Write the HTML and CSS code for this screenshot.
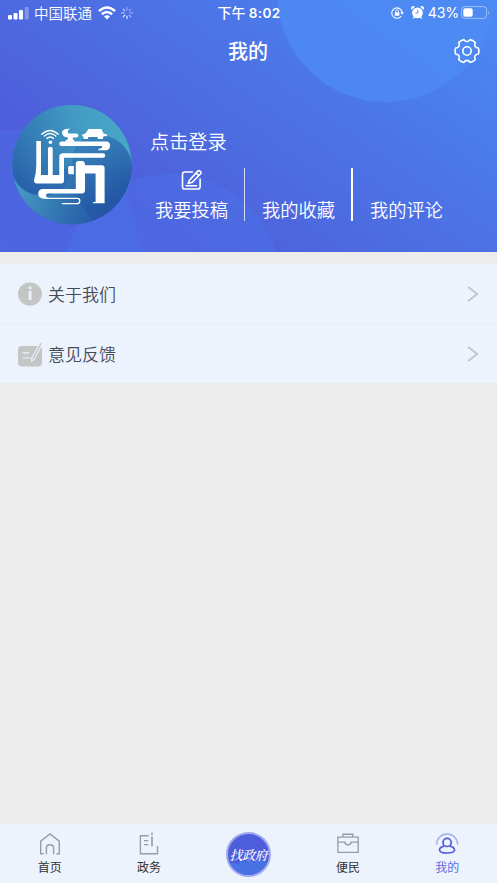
FILE: index.html
```html
<!DOCTYPE html>
<html lang="zh-CN">
<head>
<meta charset="utf-8">
<meta name="viewport" content="width=device-width, initial-scale=1">
<title>我的</title>
<link rel="stylesheet" href="styles.css">
</head>
<body>
<div class="app">
  <header class="hero">
    <svg class="hero-bg" viewBox="0 0 497 252" aria-hidden="true">
      <circle cx="386" cy="-7" r="109" fill="#4d8bf4" fill-opacity=".8"/>
      <circle cx="20" cy="247" r="118" fill="#4b72e8" fill-opacity=".35"/>
      <circle cx="171" cy="284" r="110" fill="#4a76ea" fill-opacity=".4"/>
    </svg>
    <div class="status">
      <div class="status-left">
        <svg width="21" height="14" viewBox="0 0 21 14" fill="#fff"><rect x="0" y="9" width="4" height="4.5" rx="1"/><rect x="5.5" y="7" width="4" height="6.5" rx="1"/><rect x="11" y="4" width="4" height="9.5" rx="1"/><rect x="16.7" y="1" width="4" height="12.5" rx="1" opacity=".3"/></svg>
        <span class="carrier">中国联通</span>
        <svg class="wifi" width="18" height="14" viewBox="0 0 18 14" fill="none" stroke="#fff" stroke-width="2.5"><path d="M1 5.1Q9-2.2 17 5.1M3.9 8.2Q9 3.7 14.1 8.2"/><path d="M6 10.4Q9 8 12 10.4L9 13.5Z" fill="#fff" stroke="none"/></svg>
        <svg class="spin" width="12" height="12" viewBox="-6 -6 12 12" stroke="#fff" stroke-width="1.1" stroke-linecap="round"><path d="M0-3V-5.4M2.1-2.1L3.8-3.8" opacity=".4"/><path d="M3 0H5.4M2.1 2.1L3.8 3.8" opacity=".55"/><path d="M0 3V5.4M-2.1 2.1L-3.8 3.8" opacity=".95"/><path d="M-3 0H-5.4M-2.1-2.1L-3.8-3.8" opacity=".7"/></svg>
      </div>
      <div class="time">下午 <b>8:02</b></div>
      <div class="status-right">
        <svg width="13" height="12" viewBox="0 0 13 12" fill="none" stroke="#fff" stroke-width="1.1"><path d="M10.2 9.2A5.2 5.2 0 1 1 11.2 5.6"/><path d="M9.2 5.2H13L11.1 7.7Z" fill="#fff" stroke="none"/><rect x="3.8" y="5.2" width="4.6" height="3.6" rx=".5" fill="#fff" stroke="none"/><path d="M4.7 5.4V4.3a1.4 1.4 0 0 1 2.8 0v1.1" stroke-width=".9"/></svg>
        <svg class="alarm" width="13" height="13" viewBox="0 0 13 13"><g fill="#fff"><circle cx="6.5" cy="6.8" r="5.4"/><path d="M.6 3.8A2 2 0 0 1 3.8.8ZM12.4 3.8A2 2 0 0 0 9.2.8ZM1.6 12.2l1.6-2.2 1.4 1-1.6 1.6ZM11.4 12.2l-1.6-2.2-1.4 1 1.6 1.6Z"/></g><path d="M6.8 3.8V7.1H4.3" fill="none" stroke="#4c82ef" stroke-width=".9"/></svg>
        <span class="pct">43%</span>
        <svg class="batt" width="29" height="13" viewBox="0 0 29 13"><rect x=".6" y=".6" width="25" height="11.8" rx="3.2" fill="none" stroke="#fff" stroke-opacity=".45"/><rect x="2.3" y="2.2" width="9.4" height="8.6" rx="1.7" fill="#fff"/><path d="M27 4.5q1.6 2 0 4Z" fill="#fff" opacity=".5"/></svg>
      </div>
    </div>
    <div class="titlebar">
      <h1>我的</h1>
      <svg class="gear" width="26" height="26" viewBox="-13 -13 26 26" fill="none" stroke="#fff" stroke-width="1.6" stroke-linejoin="round"><path d="M11.4 3C8.2 3.3 6.9 5.4 8.3 8.4Q6.3 10.8 3.1 11.4C1.3 8.7-1.3 8.7-3.1 11.4Q-6.3 10.8-8.3 8.4C-6.9 5.4-8.2 3.3-11.4 3Q-12.4 0-11.4-3C-8.2-3.3-6.9-5.4-8.3-8.4Q-6.3-10.8-3.1-11.4C-1.3-8.7 1.3-8.7 3.1-11.4Q6.3-10.8 8.3-8.4C6.9-5.4 8.2-3.3 11.4-3Q12.4 0 11.4 3Z"/><circle r="4.2"/></svg>
    </div>
    <div class="profile">
      <svg class="avatar" width="120" height="120" viewBox="0 0 120 120">
        <defs>
          <linearGradient id="base" x1="0" y1="0" x2=".9" y2="1"><stop offset="0" stop-color="#347fb9"/><stop offset=".5" stop-color="#3478b8"/><stop offset="1" stop-color="#204f9e"/></linearGradient>
          <linearGradient id="top" x1="0" y1=".6" x2="1" y2=".4"><stop offset="0" stop-color="#2f72b2"/><stop offset=".6" stop-color="#439bc3"/><stop offset="1" stop-color="#4aa8c9"/></linearGradient>
          <linearGradient id="left" gradientUnits="userSpaceOnUse" x1="62" y1="22" x2="20" y2="92"><stop offset="0" stop-color="#3b8bbf" stop-opacity="0"/><stop offset="1" stop-color="#2455a4"/></linearGradient>
          <linearGradient id="low" x1="0" y1="0" x2="1" y2=".2"><stop offset="0" stop-color="#4aa5c7"/><stop offset=".65" stop-color="#2c69ad"/><stop offset="1" stop-color="#2152a2"/></linearGradient>
          <linearGradient id="right" x1=".3" y1="0" x2=".6" y2="1"><stop offset="0" stop-color="#3a87bd"/><stop offset=".8" stop-color="#2356a4"/></linearGradient>
          <clipPath id="disc"><circle cx="60" cy="59.6" r="59.8"/></clipPath>
        </defs>
        <g clip-path="url(#disc)">
          <rect width="120" height="120" fill="url(#base)"/>
          <path d="M0 0H120V60Q112 28 82 30Q60 34 60 60L0 85Z" fill="url(#top)"/>
          <path d="M0 0H82V30Q61 38 60 62Q58 84 38 90Q12 94 1 70Z" fill="url(#left)" fill-opacity=".75"/>
          <path d="M1 72Q12 94 38 90Q56 86 59 66L90 60L120 65V120H0Z" fill="url(#low)"/>
          <path d="M66 42Q76 29 91 31Q112 33 120 55V120H85Q60 94 59 66Z" fill="url(#right)" fill-opacity=".75"/>
        </g>
        <g fill="#fff">
          <path d="M24.3 36H29V70H36V43.5Q36 41.7 38.3 41.7T40.7 43.5V70H47.3V52Q47.3 48.3 51 48.3H91Q93.2 48.3 93.2 50.5T91 52.7H52V76Q52 78.4 49.5 78.4H25Q22 78.4 22 75.5Q24.3 68 24.3 60Z"/>
          <circle cx="38.4" cy="37.3" r="1.8"/>
          <path d="M49.5 36.6H94Q98 36.8 98 40.5Q98 45.3 93.5 45.3H86Q86.5 43.4 90 43.1V41H49.5Q47.3 41 47.3 38.8T49.5 36.6Z"/>
          <path d="M57.5 61H61.8V69.2H57.5Q56.2 69.2 56.2 67.5V62.5Q56.2 61 57.5 61Z"/>
          <path d="M63.8 59Q63.8 56.1 66.8 56.1H70Q73 56.1 73 60.2H90Q92.6 60.2 92.6 62.8V98.3H80.4Q80.5 97 83.6 96.8V68.5H73V85Q73 88.4 70 88.4H36Q34 88.5 34 90.5Q34 92.5 36 92.7V93.8H32Q26.2 93.2 26.2 89Q26.2 84.2 31 84.1H63.8Z"/>
          <path d="M58 23.8Q51 23 50 27.2Q50 31.8 55.8 32.6Q56.8 34.6 53.5 35.4V36.8H62.3V35.4Q60 34.6 61 32.6H64.5Q66.5 32 66.5 30.3Q66.3 28.6 64 28.6H56.5Q54.5 25.8 58 23.8Z"/>
          <path d="M76.5 24.1H89.5L91.5 28.4L95 29.4V31.3H91.5L90.8 34H86L85.3 32H76.5L75.8 34H71.8L71.2 31.3H70V29.7Q74 28.7 74.5 27Z"/>
        </g>
        <g fill="none" stroke="#fff" stroke-linecap="round"><path d="M29.8 29.2Q38 21.8 46.2 29.2" stroke-width="1.3"/><path d="M32.4 31Q38 26 43.8 31" stroke-width="1.3"/><path d="M35 33.4Q38.2 30.6 41.4 33.4" stroke-width="1.4"/><path d="M34 93.3H65.5Q67.8 93.3 67.8 95.8T65.5 98.7H50.5" stroke-width="1.3"/></g>
      </svg>
      <div class="profile-body">
        <div class="login">点击登录</div>
        <nav class="actions">
          <a class="action"><svg width="22" height="22" viewBox="0 0 22 22" fill="none" stroke="#fff" stroke-width="1.6" stroke-linecap="round" stroke-linejoin="round"><path d="M11.5 3H3.8Q1.5 3 1.5 5.3V17.7Q1.5 20 3.8 20H16.8Q19.1 20 19.1 17.7V10"/><path d="M8.4 11.2L16.5 2.4Q17.6 1.1 19 2.1Q20.8 3.4 19.6 4.8L11.3 13.2L7.1 14.5ZM15.2 4.1L17.7 6.3"/><path d="M5.2 16.7H15.5"/></svg><span>我要投稿</span></a>
          <a class="action"><span>我的收藏</span></a>
          <a class="action"><span>我的评论</span></a>
        </nav>
      </div>
    </div>
  </header>
  <main class="menu">
    <a class="row">
      <svg width="24" height="24" viewBox="0 0 24 24"><ellipse cx="12" cy="12" rx="12" ry="11.5" fill="#c4c5c5"/><path d="M12.1 8.8V18" stroke="#edf3fd" stroke-width="2.8"/><circle cx="12.1" cy="5.8" r="1.5" fill="#edf3fd"/></svg>
      <span>关于我们</span>
      <svg class="chev" width="12" height="16" viewBox="0 0 12 16"><path d="M1.2 1L10.2 8L1.2 15"/></svg>
    </a>
    <a class="row">
      <svg width="24" height="25" viewBox="0 0 24 25" fill="none"><rect y="4" width="24" height="20.5" rx="4" fill="#c4c5c5"/><path d="M4.8 10.8H11.2M4.8 16H12.5" stroke="#edf3fd" stroke-width="1.2"/><path d="M21.5 2.2L13.8 16L13.6 19L16.2 17.2L22.6 5" stroke="#edf3fd" stroke-width="1.2"/><path d="M23.3.7L15.1 16.7" stroke="#c4c5c5" stroke-width="1.2"/></svg>
      <span>意见反馈</span>
      <svg class="chev" width="12" height="16" viewBox="0 0 12 16"><path d="M1.2 1L10.2 8L1.2 15"/></svg>
    </a>
  </main>
  <footer class="tabs">
    <a class="tab"><svg width="24" height="24" viewBox="0 0 24 24" fill="none" stroke="#989da8" stroke-width="1.4"><path d="M5.7 21.8H2.7V9.2L12 2L21.3 9.2V21.8H18.3"/><path d="M8.4 22.3V16.2Q8.4 12.7 12 12.7T15.6 16.2V22.3"/></svg><span>首页</span></a>
    <a class="tab"><svg width="24" height="24" viewBox="0 0 24 24" fill="none" stroke="#989da8" stroke-width="1.4"><path d="M11.5 3.8H3.4V21.8H20.5V14"/><path d="M7 8.6H11.3M7 12.6H11.3"/><path d="M15 4.5V14.2M15 .8V3.1" stroke-width="1.7"/></svg><span>政务</span></a>
    <a class="tab"><span class="gov"><svg viewBox="0 0 40 40"><path d="M0 30Q5 26 10 29L14 25L18 27L22 24L26 28L31 24L40 28V40H0Z" fill="#4679e5" fill-opacity=".75"/><path d="M9 34L14 30L18 33L23 28L32 36" fill="none" stroke="#5278e0"/></svg><em>找政府</em></span></a>
    <a class="tab"><svg width="24" height="24" viewBox="0 0 24 24" fill="none" stroke="#989da8" stroke-width="1.4"><path d="M7 5V2.2H16.8V5M1.9 5.1H22.2V20.4H1.9ZM1.9 10.1H9.1V11.5Q12 14.2 14.9 11.5V10.1H22.2"/></svg><span>便民</span></a>
    <a class="tab active"><svg width="24" height="24" viewBox="0 0 24 24" fill="none" stroke="#505ddd" stroke-width="1.7"><path d="M1.6 12.5A10.5 10.5 0 0 1 22.6 12.5" stroke="#a6adf0" stroke-width="1.5"/><circle cx="12.1" cy="10.4" r="4.1"/><path d="M9 14.2Q4.7 15.2 4.5 18.1Q5 21 12 21T19.6 18.1Q19.3 15.2 15 14.2"/></svg><span>我的</span></a>
  </footer>
</div>
</body>
</html>
```
FILE: styles.css
```css
* { box-sizing: border-box; }
body { margin: 0; font-family: "Noto Sans CJK SC", sans-serif; }
svg { display: block; flex: none; }
.app { height: 883px; display: flex; flex-direction: column; background: #ececec; overflow: hidden; }

.hero {
  position: relative;
  height: 252px;
  flex: none;
  overflow: hidden;
  color: #fff;
  background: linear-gradient(35deg, #4e60dc 0%, #4f5edb 24%, #4d69df 41%, #4c76e7 65%, #4b8bf3 100%);
}
.hero-bg { position: absolute; inset: 0; width: 100%; height: 100%; }
.status, .titlebar, .profile { position: relative; }

.status { display: grid; grid-template-columns: 1fr auto 1fr; align-items: center; height: 25px; padding: 0 7px 0 8px; }
.status-left, .status-right { display: flex; align-items: center; }
.status-right { justify-content: flex-end; }
.carrier { margin-left: 5px; font-size: 14.5px; line-height: 24px; font-weight: 350; }
.wifi { margin-left: 6px; }
.spin { margin-left: 5px; }
.time { font-size: 14px; line-height: 24px; font-weight: 500; }
.time b { font-family: Inter, sans-serif; font-size: 13.5px; font-weight: 600; letter-spacing: .35px; }
.alarm { margin-left: 7px; }
.pct { margin-left: 4px; font: 14.2px/24px Inter, sans-serif; letter-spacing: -.2px; }
.batt { margin-left: 2px; }

.titlebar { display: flex; justify-content: center; align-items: center; height: 51px; }
.titlebar h1 { margin: 0 1px 0 0; font-size: 20px; line-height: 50px; font-weight: 500; }
.gear { position: absolute; right: 17.5px; top: 13px; }

.profile { display: flex; padding: 29px 0 0 12px; }
.profile-body { padding: 21px 0 0 5px; }
.login { padding-left: 13px; font-size: 19.2px; line-height: 30px; font-weight: 350; }
.actions { display: flex; margin-top: 12px; }
.action { display: flex; flex-direction: column; justify-content: flex-end; align-items: center; width: 108px; height: 53px; border-right: 1px solid rgba(255, 255, 255, .75); font-size: 18.3px; line-height: 24px; font-weight: 350; }
.action:first-child { padding-left: 2px; }
.action:nth-child(2) { border-right: 2px solid #fff; padding-left: 1px; }
.action:last-child { border: 0; padding-right: 1px; }
.action svg { margin: 0 0 6px 1px; }

.menu { margin-top: 12px; background: #edf3fd; flex: none; }
.row { display: flex; align-items: center; height: 60px; padding: 0 18px; color: #464a56; font-size: 17px; font-weight: 350; }
.row + .row { height: 59px; border-top: 1px solid #e9ecf1; }
.row span { flex: 1; margin: -2px 0 0 6px; }
.chev path { fill: none; stroke: #bec2ca; stroke-width: 1.6; }

.tabs { display: grid; grid-template-columns: repeat(5, 1fr); height: 59px; margin-top: auto; background: #edf3fd; }
.tab { display: flex; flex-direction: column; align-items: center; padding-top: 8px; font-size: 12px; line-height: 18px; color: #333; }
.tab > span:not(.gov) { margin-top: 2px; }
.tab.active { color: #606be2; }
.gov { display: grid; place-items: center; width: 45px; height: 45px; border-radius: 50%; border: 2.5px solid #a1aaf0; background: #4d5ddb; overflow: hidden; color: #fff; }
.gov > * { grid-area: 1 / 1; }
.gov svg { width: 40px; height: 40px; }
.gov em { position: relative; font: italic 500 13px/20px "Noto Serif CJK SC", "Noto Sans CJK SC", serif; letter-spacing: -.4px; white-space: nowrap; }
```
